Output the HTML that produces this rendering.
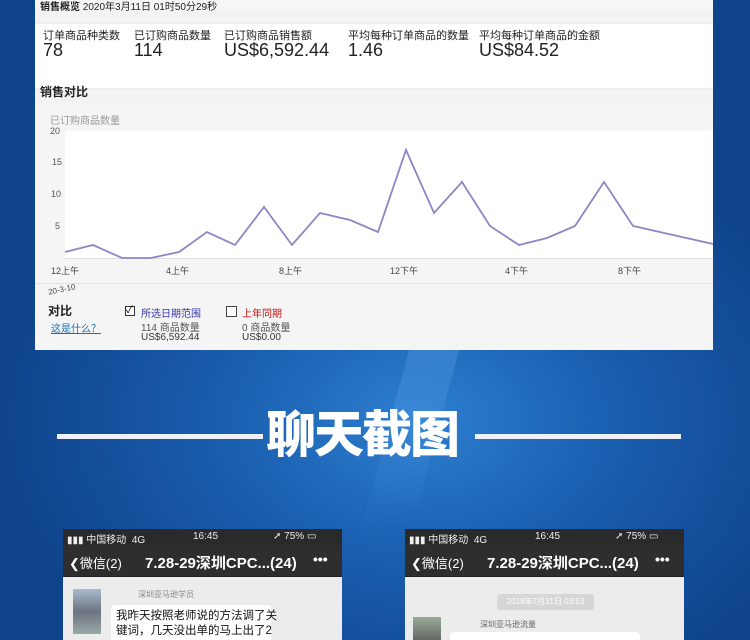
<!DOCTYPE html>
<html><head><meta charset="utf-8"><style>
*{margin:0;padding:0;box-sizing:border-box}
body{width:750px;height:640px;overflow:hidden;position:relative;font-family:"Liberation Sans","Noto Sans CJK SC",sans-serif;
background:radial-gradient(ellipse 420px 300px at 420px 420px,#2e7fd0 0%,#1a5fb0 45%,#144f9c 75%,#0f448c 100%);}
.abs{position:absolute}
.panel{left:35px;top:0;width:678px;height:350px;background:#f3f3f3}
.t{position:absolute;white-space:nowrap;color:#222}
.phone{position:absolute;top:529px;width:279px;height:111px;background:#ececec;overflow:hidden}
.sb{height:16px;background:#2a2a2a;color:#eee;font-size:10px;position:relative}
.nav{height:32px;background:#2e2e2e;color:#fff;position:relative;border-bottom:1px solid #222}
</style></head><body>
<div class="abs" style="left:385px;top:350px;width:50px;height:180px;background:linear-gradient(180deg,rgba(120,190,255,.22),rgba(120,190,255,0));transform:skewX(-15deg)"></div>
<div class="abs panel">
  <div class="abs" style="left:0;top:0;width:678px;height:10px;background:#f6f6f6"></div>
  <div class="t" style="left:5px;top:-2px;font-size:10px;"><b>销售概览</b> 2020年3月11日 01时50分29秒</div>
  <div class="abs" style="left:0;top:22px;width:678px;height:68px;background:#fff;border-top:2px solid #eee;border-bottom:2px solid #eee"></div>
  <div class="t" style="left:8px;top:27px;font-size:11px">订单商品种类数</div>
  <div class="t" style="left:8px;top:40px;font-size:18px">78</div>
  <div class="t" style="left:99px;top:27px;font-size:11px">已订购商品数量</div>
  <div class="t" style="left:99px;top:40px;font-size:18px">114</div>
  <div class="t" style="left:189px;top:27px;font-size:11px">已订购商品销售额</div>
  <div class="t" style="left:189px;top:40px;font-size:18px">US$6,592.44</div>
  <div class="t" style="left:313px;top:27px;font-size:11px">平均每种订单商品的数量</div>
  <div class="t" style="left:313px;top:40px;font-size:18px">1.46</div>
  <div class="t" style="left:444px;top:27px;font-size:11px">平均每种订单商品的金额</div>
  <div class="t" style="left:444px;top:40px;font-size:18px">US$84.52</div>
  <div class="abs" style="left:0;top:103px;width:678px;height:247px;background:#f5f5f5"></div>
  <div class="t" style="left:5px;top:83px;font-size:12px;font-weight:bold">销售对比</div>
  <div class="t" style="left:15px;top:112px;font-size:10px;color:#999">已订购商品数量</div>
  <div class="t" style="left:15px;top:126px;font-size:9px;color:#555">20</div>
  <div class="t" style="left:17px;top:157px;font-size:9px;color:#555">15</div>
  <div class="t" style="left:16px;top:189px;font-size:9px;color:#555">10</div>
  <div class="t" style="left:20px;top:221px;font-size:9px;color:#555">5</div>
  <div class="abs" style="left:30px;top:131px;width:648px;height:128px;background:#fff;border-bottom:1px solid #ddd"></div>
  <div class="t" style="left:16px;top:264px;font-size:9px;color:#444">12上午</div>
  <div class="t" style="left:131px;top:264px;font-size:9px;color:#444">4上午</div>
  <div class="t" style="left:244px;top:264px;font-size:9px;color:#444">8上午</div>
  <div class="t" style="left:355px;top:264px;font-size:9px;color:#444">12下午</div>
  <div class="t" style="left:470px;top:264px;font-size:9px;color:#444">4下午</div>
  <div class="t" style="left:583px;top:264px;font-size:9px;color:#444">8下午</div>
  <div class="abs" style="left:0;top:283px;width:678px;height:1px;background:#e4e4e4"></div>
  <div class="t" style="left:13px;top:285px;font-size:8px;color:#444;transform:rotate(-12deg)">20-3-10</div>
  <div class="t" style="left:13px;top:302px;font-size:12px;font-weight:bold">对比</div>
  <div class="t" style="left:16px;top:320px;font-size:10px;color:#1a6fb0;text-decoration:underline">这是什么？</div>
  <div class="abs" style="left:90px;top:306px;width:10px;height:10px;border:1px solid #333;background:#fff;font-size:10px;line-height:8px">✓</div>
  <div class="t" style="left:106px;top:305px;font-size:10px;color:#3333aa">所选日期范围</div>
  <div class="t" style="left:106px;top:319px;font-size:10px;color:#555">114 商品数量</div>
  <div class="t" style="left:106px;top:332px;font-size:10px;color:#333">US$6,592.44</div>
  <div class="abs" style="left:191px;top:306px;width:11px;height:11px;border:1px solid #444;background:#fff"></div>
  <div class="t" style="left:207px;top:305px;font-size:10px;color:#cc1111">上年同期</div>
  <div class="t" style="left:207px;top:319px;font-size:10px;color:#555">0 商品数量</div>
  <div class="t" style="left:207px;top:332px;font-size:10px;color:#333">US$0.00</div>
</div>
<svg class="abs" style="left:0;top:0" width="750" height="350">
<polyline fill="none" stroke="#8c87c4" stroke-width="1.8" points="65,252 93,245 122,258 151,258 179,252 207,232 235,245 264,207 292,245 320,213 350,220 378,232 406,150 434,213 462,182 490,226 519,245 547,238 575,226 604,182 633,226 713,244"/>
</svg>
<div class="abs" style="left:57px;top:434px;width:206px;height:5px;background:#eef2f8"></div>
<div class="abs" style="left:475px;top:434px;width:206px;height:5px;background:#eef2f8"></div>
<div class="t" style="left:266px;top:409px;font-size:50px;font-weight:900;color:#fff;letter-spacing:-2px;line-height:52px">聊天截图</div>

<div class="phone" style="left:63px">
  <div class="sb"><span class="abs" style="left:4px;top:2px">▮▮▮ 中国移动 &nbsp;4G</span><span class="abs" style="left:130px;top:2px">16:45</span><span class="abs" style="left:210px;top:2px">➚ 75% ▭</span></div>
  <div class="nav"><span class="abs" style="left:6px;top:8px;font-size:13px">❮微信(2)</span><span class="abs" style="left:82px;top:7px;font-size:15px;font-weight:bold">7.28-29深圳CPC...(24)</span><span class="abs" style="left:250px;top:6px;font-size:14px;font-weight:bold">•••</span></div>
  <div class="abs" style="left:10px;top:60px;width:28px;height:45px;background:linear-gradient(#aabbd0,#6c7380 50%,#9aa 100%)"></div>
  <div class="t" style="left:75px;top:60px;font-size:8px;color:#888">深圳亚马逊学员</div>
  <div class="abs" style="left:48px;top:76px;width:160px;height:40px;background:#fff;border-radius:4px"></div>
  <div class="t" style="left:53px;top:80px;font-size:11.5px;line-height:15px;color:#111">我昨天按照老师说的方法调了关<br>键词，几天没出单的马上出了2</div>
</div>
<div class="phone" style="left:405px">
  <div class="sb"><span class="abs" style="left:4px;top:2px">▮▮▮ 中国移动 &nbsp;4G</span><span class="abs" style="left:130px;top:2px">16:45</span><span class="abs" style="left:210px;top:2px">➚ 75% ▭</span></div>
  <div class="nav"><span class="abs" style="left:6px;top:8px;font-size:13px">❮微信(2)</span><span class="abs" style="left:82px;top:7px;font-size:15px;font-weight:bold">7.28-29深圳CPC...(24)</span><span class="abs" style="left:250px;top:6px;font-size:14px;font-weight:bold">•••</span></div>
  <div class="abs" style="left:92px;top:65px;width:97px;height:16px;background:#d6d6d6;border-radius:3px;color:#fff;font-size:8px;text-align:center;line-height:16px">2018年7月31日 03:53</div>
  <div class="abs" style="left:8px;top:88px;width:28px;height:30px;background:linear-gradient(#9a9,#555)"></div>
  <div class="t" style="left:75px;top:90px;font-size:8px;color:#666">深圳亚马逊流量</div>
  <div class="abs" style="left:45px;top:103px;width:190px;height:20px;background:#fff;border-radius:4px"></div>
</div>
</body></html>
